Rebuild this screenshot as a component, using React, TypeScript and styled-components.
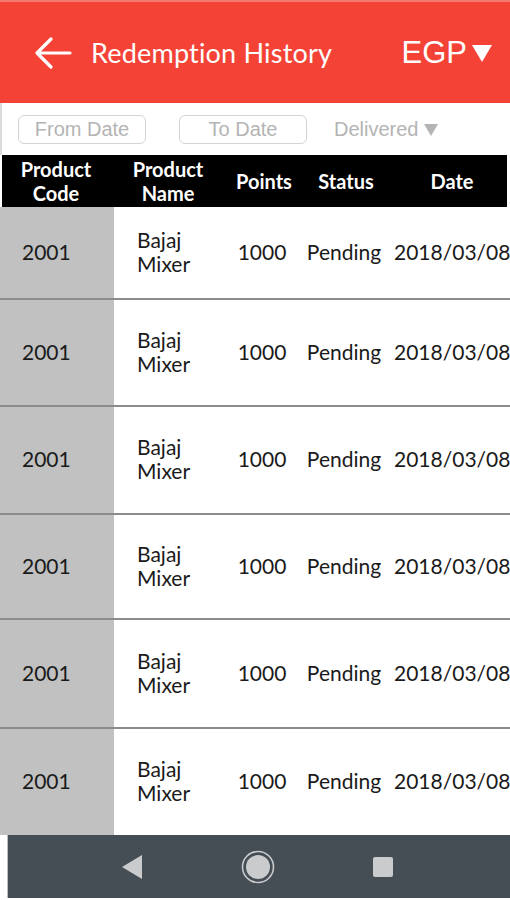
import React from "react";
import styled, { createGlobalStyle } from "styled-components";

const Global = createGlobalStyle`
  html, body { margin: 0; padding: 0; background: #ffffff; }
  body { font-family: Lato, "Noto Sans", "DejaVu Sans", sans-serif; }
  * { box-sizing: border-box; }
`;

const Screen = styled.div`
  width: 510px;
  height: 900px;
  display: flex;
  flex-direction: column;
  overflow: hidden;
  background: #ffffff;
`;

const AppBar = styled.header`
  height: 103px;
  flex: 0 0 103px;
  background: #f44336;
  border-top: 2px solid #f47a70;
  display: flex;
  align-items: center;
  padding: 0 18px 0 34px;
  color: #ffffff;
`;

const BackButton = styled.div`
  width: 38px;
  height: 34px;
  display: flex;
  align-items: center;
  margin-right: 19px;
`;

const Title = styled.h1`
  flex: 1;
  margin: 0;
  font-size: 27px;
  font-weight: 400;
  letter-spacing: 0.2px;
`;

const Currency = styled.div`
  font-family: "Liberation Sans", Arial, sans-serif;
  font-size: 31px;
  display: flex;
  align-items: center;
  gap: 5px;
`;

const FilterBar = styled.div`
  height: 52px;
  flex: 0 0 52px;
  display: flex;
  align-items: center;
  padding-left: 16px;
  border-left: 2px solid #dcdcdc;
`;

const DateBox = styled.div<{ $ml?: number }>`
  width: 128px;
  height: 29px;
  margin-left: ${(p) => p.$ml ?? 0}px;
  border: 1.5px solid #d4d4d4;
  border-radius: 6px;
  display: flex;
  align-items: center;
  justify-content: center;
  font-family: "Liberation Sans", Arial, sans-serif;
  font-size: 20px;
  color: #b4b4b4;
`;

const StatusSelect = styled.div`
  margin-left: 27px;
  font-family: "Liberation Sans", Arial, sans-serif;
  font-size: 20px;
  color: #b4b4b4;
  display: flex;
  align-items: center;
  gap: 6px;
`;

const Table = styled.div`
  flex: 1;
  display: flex;
  flex-direction: column;
  overflow: hidden;
`;

const columns = "114px 112px 72px 92px 120px";

const HeadRow = styled.div`
  height: 52px;
  flex: 0 0 52px;
  display: grid;
  grid-template-columns: ${columns};
  background: #000000;
  margin: 0 3px 0 2px;
  color: #ffffff;
`;

const HeadCell = styled.div<{ $pr?: number }>`
  display: flex;
  align-items: center;
  justify-content: center;
  text-align: center;
  padding-right: ${(p) => p.$pr ?? 0}px;
  font-size: 20px;
  font-weight: 700;
  line-height: 24px;
`;

const Row = styled.div<{ $h: number; $last?: boolean }>`
  height: ${(p) => p.$h + (p.$last ? 0 : 2)}px;
  flex: 0 0 auto;
  display: grid;
  grid-template-columns: ${columns};
  border-bottom: ${(p) => (p.$last ? "none" : "2px solid #8c8c8c")};
`;

const Cell = styled.div<{ $align?: "left" | "center"; $pl?: number; $shade?: boolean }>`
  display: flex;
  align-items: center;
  justify-content: ${(p) => (p.$align === "left" ? "flex-start" : "center")};
  padding-left: ${(p) => p.$pl ?? 0}px;
  padding-bottom: 2px;
  background: ${(p) => (p.$shade ? "#c1c1c1" : "#ffffff")};
  font-size: 21px;
  color: #1a1a1a;
  line-height: 24px;
  white-space: nowrap;
`;

const NameText = styled.div`
  white-space: normal;
  line-height: 24px;
`;

const NavBar = styled.nav`
  height: 63px;
  flex: 0 0 63px;
  margin: 0 0 2px 7px;
  background: #454d55;
  border-left: 1px solid #bdbdbd;
  display: flex;
  align-items: center;
`;

const NavSlot = styled.div<{ $x: number }>`
  margin-left: ${(p) => p.$x}px;
  display: flex;
  align-items: center;
`;

const rowHeights = [91, 105, 106, 103, 107, 106];

export default function App() {
  return (
    <>
      <Global />
      <Screen>
        <AppBar>
          <BackButton>
            <svg width="38" height="34" viewBox="0 0 38 34">
              <path d="M3 17 H36 M17 3 L3 17 L17 31" fill="none" stroke="#fff" strokeWidth="3.2" strokeLinecap="round" strokeLinejoin="round" />
            </svg>
          </BackButton>
          <Title>Redemption History</Title>
          <Currency>
            EGP
            <svg width="20" height="18" viewBox="0 0 20 18">
              <path d="M0 1 H20 L10 18 Z" fill="#fff" />
            </svg>
          </Currency>
        </AppBar>
        <FilterBar>
          <DateBox>From Date</DateBox>
          <DateBox $ml={33}>To Date</DateBox>
          <StatusSelect>
            Delivered
            <svg width="14" height="13" viewBox="0 0 14 13">
              <path d="M0 1 H14 L7 13 Z" fill="#b4b4b4" />
            </svg>
          </StatusSelect>
        </FilterBar>
        <Table>
          <HeadRow>
            <HeadCell $pr={6}>Product<br />Code</HeadCell>
            <HeadCell $pr={8}>Product<br />Name</HeadCell>
            <HeadCell>Points</HeadCell>
            <HeadCell>Status</HeadCell>
            <HeadCell>Date</HeadCell>
          </HeadRow>
          {rowHeights.map((h, i) => (
            <Row key={i} $h={h} $last={i === rowHeights.length - 1}>
              <Cell $shade $align="left" $pl={22}>2001</Cell>
              <Cell $align="left" $pl={23}>
                <NameText>Bajaj<br />Mixer</NameText>
              </Cell>
              <Cell>1000</Cell>
              <Cell>Pending</Cell>
              <Cell $align="left" $pl={4}>2018/03/08</Cell>
            </Row>
          ))}
        </Table>
        <NavBar>
          <NavSlot $x={113}>
            <svg width="22" height="26" viewBox="0 0 22 26">
              <path d="M21 1 V25 L1 13 Z" fill="#c9cbcd" />
            </svg>
          </NavSlot>
          <NavSlot $x={98}>
            <svg width="34" height="34" viewBox="0 0 34 34">
              <circle cx="17" cy="17" r="15.5" fill="none" stroke="#c9cbcd" strokeWidth="1.6" />
              <circle cx="17" cy="17" r="12" fill="#c9cbcd" />
            </svg>
          </NavSlot>
          <NavSlot $x={97}>
            <svg width="22" height="22" viewBox="0 0 22 22">
              <rect x="1" y="1" width="20" height="20" rx="2" fill="#c9cbcd" />
            </svg>
          </NavSlot>
        </NavBar>
      </Screen>
    </>
  );
}
